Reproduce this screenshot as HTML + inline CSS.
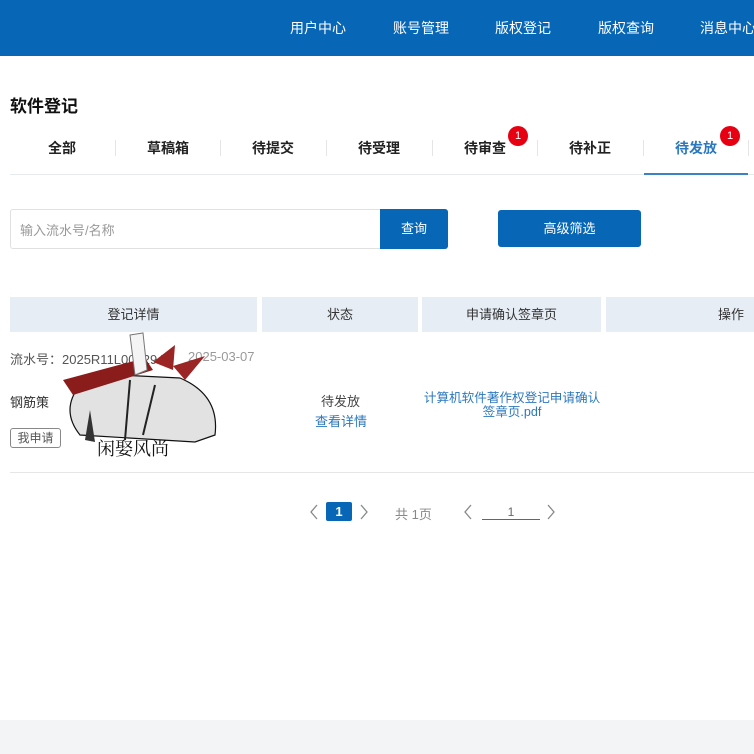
<!DOCTYPE html>
<html><head><meta charset="utf-8"><style>
*{margin:0;padding:0;box-sizing:border-box}
body{width:754px;height:754px;overflow:hidden;background:#fff;font-family:"Liberation Sans","Noto Sans CJK SC",sans-serif;position:relative;color:#333}
.a{position:absolute;white-space:nowrap}
.hdr{position:absolute;left:0;top:0;width:754px;height:56px;background:#0766b5}
.nav{color:#fff;font-size:14px;top:18px}
.tab{position:absolute;top:138px;width:106px;text-align:center;font-size:14px;font-weight:bold;color:#222}
.sep{position:absolute;top:140px;width:1px;height:16px;background:#e5e5e5}
.badge{position:absolute;width:20px;height:20px;border-radius:10px;background:#e60012;color:#fff;font-size:11px;text-align:center;line-height:20px}
.th{position:absolute;top:297px;height:35px;background:#e7edf5;font-size:13px;color:#333;text-align:center;line-height:35px}
</style></head><body>
<div class="hdr"></div>
<div class="a nav" style="left:290px">用户中心</div>
<div class="a nav" style="left:393px">账号管理</div>
<div class="a nav" style="left:495px">版权登记</div>
<div class="a nav" style="left:598px">版权查询</div>
<div class="a nav" style="left:700px">消息中心</div>

<div class="a" style="left:10px;top:92px;font-size:17px;font-weight:bold;color:#111">软件登记</div>
<div class="tab" style="left:9px">全部</div>
<div class="tab" style="left:115px">草稿箱</div>
<div class="tab" style="left:220px">待提交</div>
<div class="tab" style="left:326px">待受理</div>
<div class="tab" style="left:432px">待审查</div>
<div class="tab" style="left:537px">待补正</div>
<div class="tab" style="left:643px;color:#2b78bd">待发放</div>
<div class="sep" style="left:115px"></div><div class="sep" style="left:220px"></div><div class="sep" style="left:326px"></div><div class="sep" style="left:432px"></div><div class="sep" style="left:537px"></div><div class="sep" style="left:643px"></div><div class="sep" style="left:748px"></div>
<div class="badge" style="left:508px;top:126px">1</div>
<div class="badge" style="left:720px;top:126px">1</div>
<div class="a" style="left:10px;top:174px;width:744px;height:1px;background:#e6e9ee"></div>
<div class="a" style="left:644px;top:173px;width:104px;height:2px;background:#3b82c4"></div>

<div class="a" style="left:10px;top:209px;width:438px;height:40px;border:1px solid #e0e0e0;border-radius:3px"></div>
<div class="a" style="left:20px;top:220px;font-size:13px;color:#999">输入流水号/名称</div>
<div class="a" style="left:380px;top:209px;width:68px;height:40px;background:#0766b5;border-radius:0 3px 3px 0;color:#fff;font-size:13px;text-align:center;line-height:40px">查询</div>
<div class="a" style="left:498px;top:210px;width:143px;height:37px;background:#0766b5;border-radius:3px;color:#fff;font-size:13px;text-align:center;line-height:37px">高级筛选</div>

<div class="th" style="left:10px;width:247px">登记详情</div>
<div class="th" style="left:262px;width:156px">状态</div>
<div class="th" style="left:422px;width:179px">申请确认签章页</div>
<div class="th" style="left:606px;width:148px;text-align:right;padding-right:10px">操作</div>

<div class="a" style="left:10px;top:349px;font-size:13px;color:#555">流水号：2025R11L000294</div>
<div class="a" style="left:188px;top:349px;font-size:13px;color:#999">2025-03-07</div>
<div class="a" style="left:10px;top:392px;font-size:13px;color:#333">钢筋策</div>
<div class="a" style="left:10px;top:428px;width:51px;height:20px;border:1px solid #888;border-radius:3px;font-size:12px;color:#555;text-align:center;line-height:18px">我申请</div>
<svg class="a" style="left:35px;top:330px" width="190" height="130" viewBox="0 0 190 130">
<path d="M45 105 Q25 80 45 55 L85 45 L145 48 Q185 65 180 105 L160 112 Z" fill="#e2e2e2" stroke="#111" stroke-width="1.2"/>
<path d="M28 50 L110 28 L118 40 L38 65 Z" fill="#8b1c1c"/>
<path d="M118 32 L140 15 L138 40 Z M138 36 L170 26 L150 50 Z" fill="#9b2424"/>
<path d="M95 5 L108 3 L112 40 L100 45 Z" fill="#f4f4f4" stroke="#777"/>
<path d="M95 50 L90 110 M120 55 L108 105" stroke="#222" stroke-width="2"/>
<path d="M55 80 L50 110 L60 112 Z" fill="#333"/>
<text x="62" y="125" font-size="18" font-family="Liberation Serif,'Noto Serif CJK SC',serif" fill="#111">闲娶风尚</text>
</svg>

<div class="a" style="left:321px;top:391px;font-size:13px;color:#444">待发放</div>
<div class="a" style="left:315px;top:411px;font-size:13px;color:#2b78bd">查看详情</div>
<div class="a" style="left:412px;top:391px;width:200px;text-align:center;font-size:12.6px;color:#2b78bd;line-height:14px">计算机软件著作权登记申请确认<br>签章页.pdf</div>

<div class="a" style="left:10px;top:472px;width:744px;height:1px;background:#e6e6e6"></div>

<svg class="a" style="left:308px;top:503px" width="12" height="18"><path d="M9 2 L3 9 L9 16" fill="none" stroke="#888" stroke-width="1.3"/></svg>
<div class="a" style="left:326px;top:502px;width:26px;height:19px;background:#0766b5;border-radius:2px;color:#fff;font-size:13px;text-align:center;line-height:19px;font-weight:bold">1</div>
<svg class="a" style="left:358px;top:503px" width="12" height="18"><path d="M3 2 L9 9 L3 16" fill="none" stroke="#888" stroke-width="1.3"/></svg>
<div class="a" style="left:395px;top:504px;font-size:13px;color:#888">共 1页</div>
<svg class="a" style="left:462px;top:503px" width="12" height="18"><path d="M9 2 L3 9 L9 16" fill="none" stroke="#888" stroke-width="1.3"/></svg>
<div class="a" style="left:482px;top:505px;width:58px;text-align:center;font-size:12px;color:#666;border-bottom:1px solid #666">1</div>
<svg class="a" style="left:545px;top:503px" width="12" height="18"><path d="M3 2 L9 9 L3 16" fill="none" stroke="#888" stroke-width="1.3"/></svg>

<div class="a" style="left:0;top:720px;width:754px;height:34px;background:#f3f4f6"></div>
</body></html>
